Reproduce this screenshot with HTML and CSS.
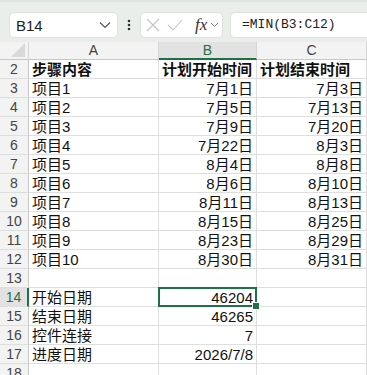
FILE: index.html
```html
<!DOCTYPE html>
<html lang="zh-CN">
<head>
  <meta charset="UTF-8">
  <title>进度表</title>
  <link rel="stylesheet" href="styles.css">
</head>
<body>

  <div class="formula-bar">
    <div class="name-box">
      <span>B14</span>
      <svg width="12" height="8" viewBox="0 0 12 8"><path d="M1 1.5 L6 6.5 L11 1.5" fill="none" stroke="#555" stroke-width="1.2"/></svg>
    </div>
    <div class="dots">
      <svg width="4" height="12" viewBox="0 0 4 12"><circle cx="2" cy="2" r="1.3" fill="#333"/><circle cx="2" cy="6" r="1.3" fill="#333"/><circle cx="2" cy="10" r="1.3" fill="#333"/></svg>
    </div>
    <div class="fx-box">
      <svg width="14" height="14" viewBox="0 0 14 14"><path d="M1 1 L13 13 M13 1 L1 13" stroke="#c4c4c4" stroke-width="1.1"/></svg>
      <svg width="16" height="14" viewBox="0 0 16 14"><path d="M1 7 L6 12 L15 2" fill="none" stroke="#c4c4c4" stroke-width="1.1"/></svg>
      <span class="fx">fx</span>
      <svg width="9" height="6" viewBox="0 0 9 6"><path d="M1 1 L4.5 4.5 L8 1" fill="none" stroke="#777" stroke-width="1"/></svg>
    </div>
    <div class="formula">=MIN(B3:C12)</div>
  </div>

  <div class="sheet" id="sheet">
    <div class="corner"><svg width="14" height="14" viewBox="0 0 14 14"><path d="M14 0 L14 14 L0 14 Z" fill="#d9d9d9"/></svg></div>
    <div class="col-head">A</div>
    <div class="col-head active">B</div>
    <div class="col-head">C</div>
  </div>

  <script>
    const rows = [
      [2, '步骤内容', '计划开始时间', '计划结束时间', true],
      [3, '项目1', '7月1日', '7月3日'],
      [4, '项目2', '7月5日', '7月13日'],
      [5, '项目3', '7月9日', '7月20日'],
      [6, '项目4', '7月22日', '8月3日'],
      [7, '项目5', '8月4日', '8月8日'],
      [8, '项目6', '8月6日', '8月10日'],
      [9, '项目7', '8月11日', '8月13日'],
      [10, '项目8', '8月15日', '8月25日'],
      [11, '项目9', '8月23日', '8月29日'],
      [12, '项目10', '8月30日', '8月31日'],
      [13, '', '', ''],
      [14, '开始日期', '46204', ''],
      [15, '结束日期', '46265', ''],
      [16, '控件连接', '7', ''],
      [17, '进度日期', '2026/7/8', ''],
      [18, '', '', '']
    ];

    const sheet = document.getElementById("sheet");

    rows.forEach(([num, a, b, c, bold]) => {
      const head = document.createElement("div");
      head.className = "row-head" + (num === 14 ? " active" : "");
      head.textContent = num;
      sheet.appendChild(head);

      [a, b, c].forEach((value, i) => {
        const cell = document.createElement("div");
        cell.className = "cell";
        if (bold) cell.classList.add("bold");
        else if (i > 0) cell.classList.add("num");
        if (num === 14 && i === 1) cell.classList.add("selected");
        cell.textContent = value;
        sheet.appendChild(cell);
      });
    });
  </script>
</body>
</html>
```

FILE: styles.css
```css
* { margin: 0; padding: 0; box-sizing: border-box; }
body {
  width: 367px;
  height: 375px;
  overflow: hidden;
  background-color: #ffffff;
  font-family: "Liberation Sans", "Noto Sans CJK SC", sans-serif;
}
.formula-bar {
  display: flex;
  align-items: center;
  height: 42px;
  padding: 6px 0 0 9px;
  background-color: #e9eeea;
  border-top: 2px solid #dfe5e1;
}
.name-box {
  display: flex;
  align-items: center;
  justify-content: space-between;
  width: 109px;
  height: 26px;
  padding: 0 6px 0 6px;
  background-color: #ffffff;
  border: 1px solid #dde2de;
  border-radius: 5px;
  font-size: 15px;
  color: #222;
}
.dots {
  display: flex;
  align-items: center;
  width: 22px;
  justify-content: center;
}
.fx-box {
  display: flex;
  align-items: center;
  gap: 7px;
  width: 83px;
  height: 26px;
  padding-left: 5px;
  background-color: #ffffff;
  border: 1px solid #dde2de;
  border-radius: 5px;
}
.fx {
  font-family: "Liberation Serif", serif;
  font-style: italic;
  font-size: 17px;
  color: #333;
  margin-left: 5px;
  margin-right: -4px;
}
.formula {
  flex: 1;
  height: 26px;
  margin-left: 7px;
  padding: 2px 0 0 11px;
  background-color: #ffffff;
  border: 1px solid #dde2de;
  border-right: none;
  border-radius: 5px 0 0 5px;
  font-family: "Liberation Mono", monospace;
  font-size: 13px;
  line-height: 20px;
  color: #222;
}
.sheet {
  display: grid;
  grid-template-columns: 29px 130px 98px 1fr;
  grid-template-rows: 18px;
  grid-auto-rows: 19px;
}
.corner {
  display: flex;
  align-items: flex-end;
  justify-content: flex-end;
  padding: 0 3px 2px 0;
  background-color: #f3f3f3;
  border-right: 1px solid #d6d6d6;
  border-bottom: 1px solid #c8c8c8;
}
.col-head {
  background-color: #f3f3f3;
  border-right: 1px solid #d6d6d6;
  border-bottom: 1px solid #c8c8c8;
  text-align: center;
  font-size: 14px;
  line-height: 17px;
  color: #444;
}
.col-head.active {
  background-color: #e2e2e2;
  border-bottom: 2px solid #1e7145;
  color: #1e7145;
}
.row-head {
  background-color: #f3f3f3;
  border-right: 1px solid #c8c8c8;
  border-bottom: 1px solid #dedede;
  text-align: center;
  font-size: 14px;
  line-height: 19px;
  color: #444;
}
.row-head.active {
  background-color: #e2e2e2;
  border-right: 2px solid #1e7145;
  color: #1e7145;
}
.cell {
  position: relative;
  border-right: 1px solid #dedede;
  border-bottom: 1px solid #dedede;
  padding: 0 3px;
  font-size: 15px;
  line-height: 19px;
  color: #111;
  white-space: nowrap;
}
.bold {
  font-weight: bold;
}
.num {
  text-align: right;
}
.selected::after {
  content: "";
  position: absolute;
  top: -1px;
  left: -1px;
  right: -1px;
  bottom: -1px;
  border: 2px solid #1e7145;
}
.selected::before {
  content: "";
  position: absolute;
  right: -4px;
  bottom: -4px;
  width: 6px;
  height: 6px;
  background-color: #1e7145;
  border: 1px solid #ffffff;
  z-index: 1;
}
```
